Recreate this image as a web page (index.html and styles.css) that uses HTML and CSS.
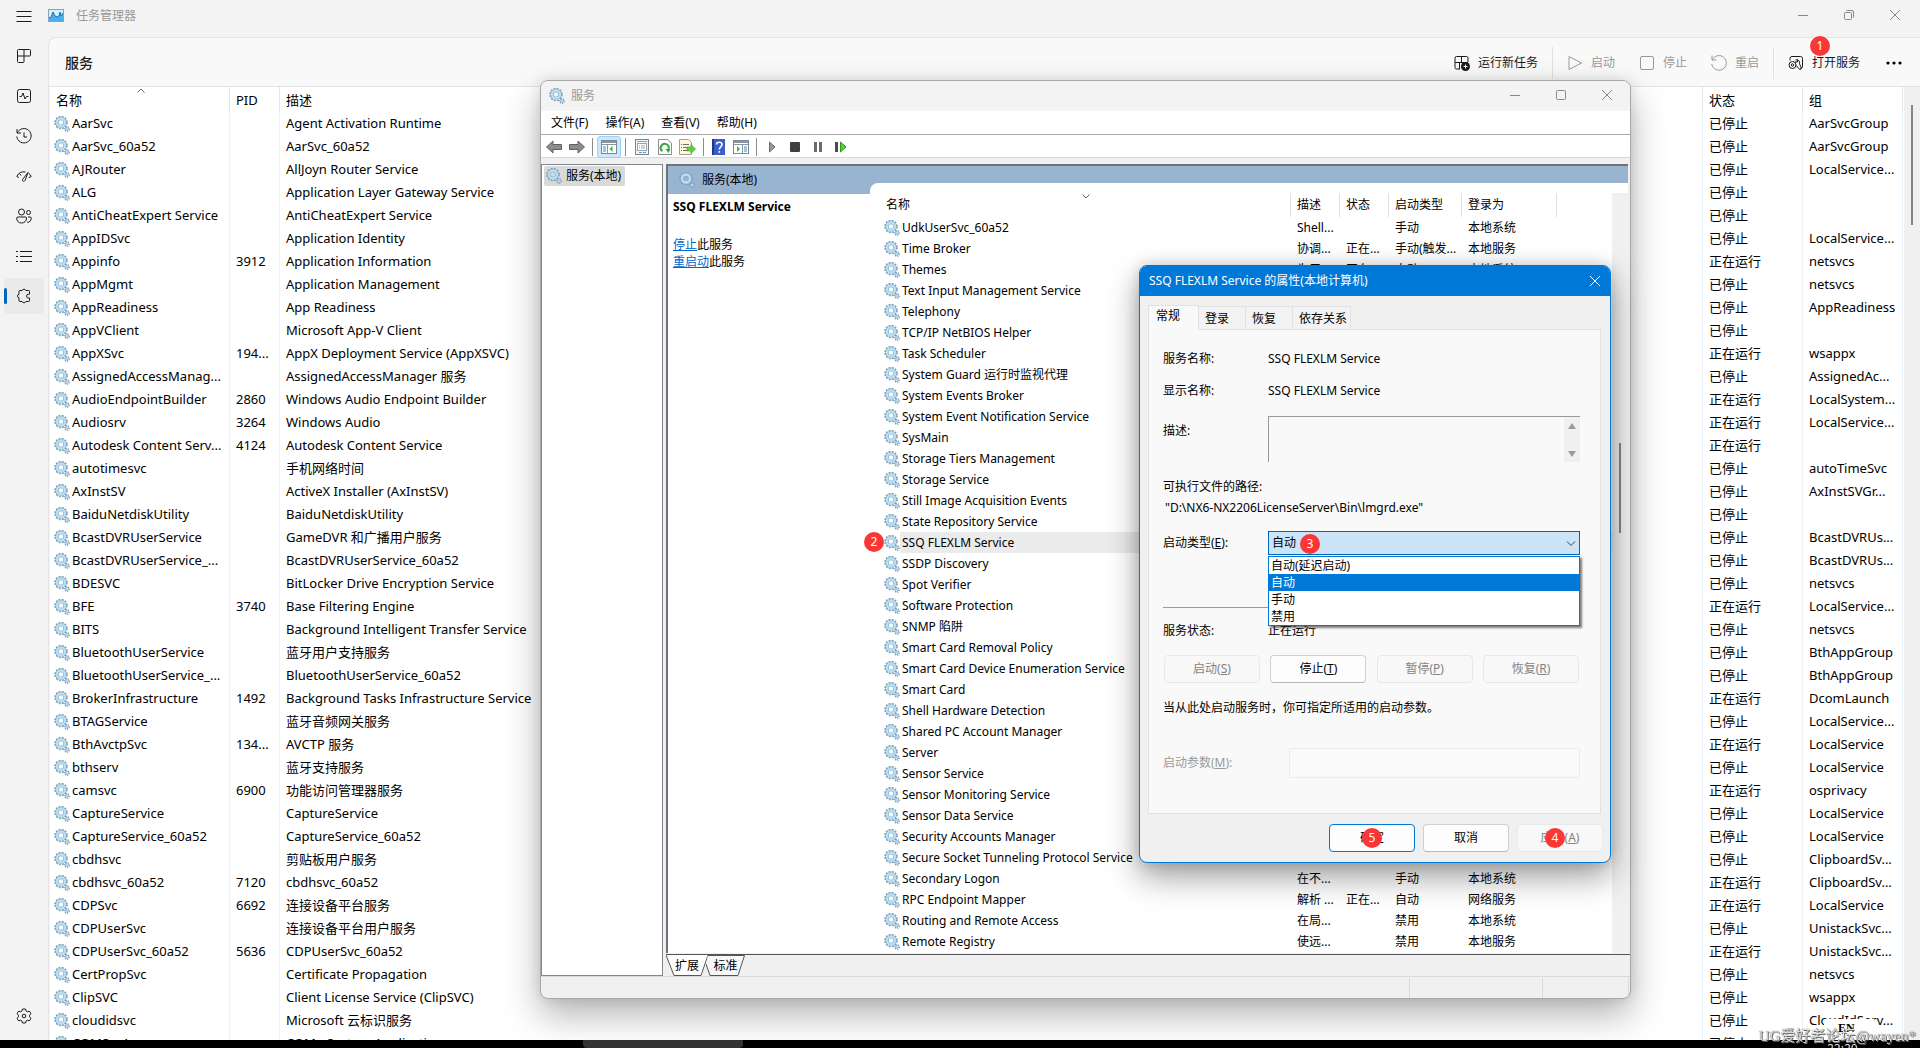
FILE: index.html
```html
<!DOCTYPE html>
<html lang="zh-CN">
<head>
<meta charset="utf-8">
<title>任务管理器</title>
<link rel="stylesheet" href="styles.css">
</head>
<body>
<svg class="defs" aria-hidden="true">
  <defs>
    <symbol id="gear" viewBox="0 0 16 16">
      <circle cx="7" cy="6.500" r="5.900" fill="none" stroke="#7d9db8" stroke-width="1.800" stroke-dasharray="1.800 1.300"/>
      <circle cx="7" cy="6.500" r="4" fill="none" stroke="#86a9c4" stroke-width="3.400"/>
      <circle cx="7" cy="6.500" r="4" fill="none" stroke="#b9dff2" stroke-width="2.400"/>
      <circle cx="13" cy="13" r="2.200" fill="none" stroke="#7d9db8" stroke-width="1.400" stroke-dasharray="1.100 .9"/>
      <circle cx="13" cy="13" r="1.300" fill="#fff" stroke="#8fb7d3" stroke-width="1.100"/>
    </symbol>
    <symbol id="close" viewBox="0 0 10 10"><path d="M0 0L10 10M10 0L0 10" fill="none" stroke="currentColor"/></symbol>
    <symbol id="min" viewBox="0 0 10 10"><path d="M0 5.500H10" fill="none" stroke="currentColor"/></symbol>
    <symbol id="max" viewBox="0 0 10 10"><rect x=".5" y=".5" width="9" height="9" rx="1" fill="none" stroke="currentColor"/></symbol>
  </defs>
</svg>

<div class="taskmgr">
  <header class="tm-title">
    <button class="icon-btn nav-toggle" aria-label="导航"><svg width="16" height="12" viewBox="0 0 16 12"><path d="M.5 1.500h15M.5 6.500h15M.5 11.500h15" stroke="#1b1b1b" fill="none"/></svg></button>
    <svg class="tm-logo" width="16" height="13" viewBox="0 0 16 13"><rect x=".5" y=".5" width="15" height="12" fill="#d9f0fc" stroke="#8aa2b4"/><path d="M1 9l2-1 2-5 2 4 2 1 2-1 1-4 1 4 2-3v8H1z" fill="#4aaeea"/><path d="M1 9l2-1 2-5 2 4 2 1 2-1 1-4 1 4 2-3" fill="none" stroke="#1673b8"/></svg>
    <span class="tm-name">任务管理器</span>
    <div class="tm-controls">
      <button class="icon-btn" aria-label="最小化"><svg width="10" height="10"><use href="#min"/></svg></button>
      <button class="icon-btn" aria-label="还原"><svg width="10" height="10" viewBox="0 0 10 10" fill="none" stroke="currentColor"><rect x=".5" y="2.500" width="7" height="7" rx="1"/><path d="M2.500 .5H8a1.500 1.500 0 0 1 1.500 1.500V7.500"/></svg></button>
      <button class="icon-btn" aria-label="关闭"><svg width="10" height="10"><use href="#close"/></svg></button>
    </div>
  </header>
  <div class="tm-body">
    <nav class="tm-nav">
      <button aria-label="进程"><svg width="16" height="16" viewBox="0 0 16 16"><path d="M3 1.500h10.500a1 1 0 0 1 1 1V7a1 1 0 0 1-1 1H8v5.500a1 1 0 0 1-1 1H2.500a1 1 0 0 1-1-1V2.500a1 1 0 0 1 1-1zM8 1.500V8M1.500 8H8"/></svg></button>
      <button aria-label="性能"><svg width="16" height="16" viewBox="0 0 16 16"><rect x="1.500" y="1.500" width="13" height="13" rx="2"/><path d="M3.500 8.500h2l1.500-3.500 2 6 1.500-2.500h2"/></svg></button>
      <button aria-label="应用历史记录"><svg width="16" height="16" viewBox="0 0 16 16"><path d="M1 1v4h4M1.300 5A7.200 7.200 0 1 1 .8 8.500M8 4.500V9h3"/></svg></button>
      <button aria-label="启动应用"><svg width="16" height="16" viewBox="0 0 16 16"><path d="M.8 8.500A8 8 0 0 1 9.500 4M12.500 5a8 8 0 0 1 2.700 3.500M.8 8.500l2 1M15.200 8.500l-2.500 1.200M12 4.500L9 12.500a1.300 1.300 0 0 1-2.500-1zM3.500 5.500l1.500 2"/></svg></button>
      <button aria-label="用户"><svg width="16" height="16" viewBox="0 0 16 16"><circle cx="5.500" cy="4" r="3"/><circle cx="12.500" cy="4.500" r="2"/><path d="M2 9h7.500a1 1 0 0 1 1 1c0 3-2 5-5 5s-4.800-2-4.800-5A1.200 1.200 0 0 1 2 9zM12 9h2.200a1 1 0 0 1 1 1c0 3-1.500 4.300-4 4.300"/></svg></button>
      <button aria-label="详细信息"><svg width="16" height="16" viewBox="0 0 16 16"><path d="M4 3.500h12M4 8.500h12M4 13.500h12"/><path d="M0 3.500h2M0 8.500h2M0 13.500h2"/></svg></button>
      <button class="current" aria-label="服务"><svg width="16" height="16" viewBox="0 0 16 16"><path d="M4 2.500h2.200a1.900 1.900 0 0 1 3.600 0H12.500a1 1 0 0 1 1 1V6.200h-1a1.900 1.900 0 0 0 0 3.800h1v2.500a1 1 0 0 1-1 1H9.800a1.900 1.900 0 0 1-3.600 0H4a1 1 0 0 1-1-1V9.900a1.900 1.900 0 0 1 0-3.700V3.500a1 1 0 0 1 1-1z"/></svg></button>
      <button class="settings" aria-label="设置"><svg width="16" height="16" viewBox="0 0 16 16"><path d="M6.500 1h3l.5 2 1.500.8 2-.6L15 5.800l-1.500 1.400v1.600L15 10.200l-1.500 2.600-2-.6-1.500.8-.5 2h-3L6 13l-1.500-.8-2 .6L1 10.200l1.500-1.400V7.200L1 5.800l1.500-2.600 2 .6L6 3z"/><circle cx="8" cy="8" r="1.800"/></svg></button>
    </nav>
    <main class="tm-main">
      <div class="tm-head">
        <h1>服务</h1>
        <div class="tm-actions">
          <button><svg width="16" height="16" viewBox="0 0 16 16"><path d="M14 7V3a1.500 1.500 0 0 0-1.500-1.500h-10A1.500 1.500 0 0 0 1 3v9.500A1.500 1.500 0 0 0 2.500 14H6M7.500 1.500v6M1 7.500h13M5.500 7.500V14" fill="none" stroke="#1b1b1b"/><circle cx="11.500" cy="11.500" r="4.500" fill="#1b1b1b"/><path d="M9.500 11.500h4M11.500 9.500v4" stroke="#fff"/></svg>运行新任务</button>
          <i></i>
          <button disabled><svg width="16" height="16" viewBox="0 0 16 16"><path d="M2 1.500L14.500 8 2 14.500z" fill="none" stroke="currentColor"/></svg>启动</button>
          <button disabled><svg width="16" height="16" viewBox="0 0 16 16"><rect x="1.500" y="1.500" width="13" height="13" rx="1.500" fill="none" stroke="currentColor"/></svg>停止</button>
          <button disabled><svg width="16" height="16" viewBox="0 0 16 16"><path d="M1 .5V5h4.500M1.300 5A7.300 7.300 0 1 1 .8 9" fill="none" stroke="currentColor"/></svg>重启</button>
          <i></i>
          <button class="open"><svg width="16" height="16" viewBox="0 0 16 16" fill="none" stroke="#1b1b1b"><path d="M2 5.500V3.500a2 2 0 0 1 2-2h8.500a2 2 0 0 1 2 2v8a2 2 0 0 1-2 2h-.5"/><circle cx="4.500" cy="10" r="3.500"/><circle cx="4.500" cy="10" r="1.200"/><path d="M7.500 5a3 3 0 0 1 4 3.800l2 4.500-1.500 1.500-4-4.500M9.500 4.500V7H7"/></svg>打开服务<b class="badge badge-1">1</b></button>
          <button class="more" aria-label="更多"><svg width="16" height="4" viewBox="0 0 16 4"><circle cx="2" cy="2" r="1.600"/><circle cx="8" cy="2" r="1.600"/><circle cx="14" cy="2" r="1.600"/></svg></button>
        </div>
      </div>
      <div class="tm-list">
        <table class="tm-table">
          <colgroup><col class="w-name"><col class="w-pid"><col><col class="w-state"><col class="w-group"></colgroup>
          <thead><tr><th>名称<svg class="sort" width="8" height="5" viewBox="0 0 8 5"><path d="M.5 4.500L4 1l3.500 3.500" fill="none" stroke="#666"/></svg></th><th>PID</th><th>描述</th><th>状态</th><th>组</th></tr></thead>
          <tbody id="tmRows"></tbody>
        </table>
        <div class="tm-scroll"><span></span></div>
      </div>
    </main>
  </div>
</div>
<footer class="taskbar"><span class="task-item"></span><time>22:20</time></footer>

<section class="svc-window" aria-label="服务">
  <header class="svc-title">
    <svg width="16" height="16"><use href="#gear"/></svg><span>服务</span>
    <div class="svc-controls">
      <button class="icon-btn" aria-label="最小化"><svg width="10" height="10"><use href="#min"/></svg></button>
      <button class="icon-btn" aria-label="最大化"><svg width="10" height="10"><use href="#max"/></svg></button>
      <button class="icon-btn" aria-label="关闭"><svg width="10" height="10"><use href="#close"/></svg></button>
    </div>
  </header>
  <div class="svc-menu"><button>文件(F)</button><button>操作(A)</button><button>查看(V)</button><button>帮助(H)</button></div>
  <div class="svc-tools">
    <button aria-label="后退"><svg width="16" height="16" viewBox="0 0 16 16"><path d="M.5 8L7 2v3.500h8.500v5H7V14z" fill="#8c8c8c" stroke="#5f5f5f"/></svg></button>
    <button class="fwd" aria-label="前进"><svg width="16" height="16" viewBox="0 0 16 16"><path d="M15.500 8L9 2v3.500H.5v5H9V14z" fill="#8c8c8c" stroke="#5f5f5f"/></svg></button>
    <i></i>
    <button class="pressed" aria-label="控制台树"><svg width="16" height="14" viewBox="0 0 16 14"><rect x=".5" y=".5" width="15" height="13" fill="#fff" stroke="#7d8894"/><path d="M1 2h14" stroke="#8b96a3" stroke-width="2"/><path d="M1 4.500h14M6.500 5v8" stroke="#8b96a3"/><path d="M2 7h3M2 9h3M2 11h3" stroke="#4a86c5"/><path d="M11.500 6v6L8.500 9z" fill="#3fb53f"/></svg></button>
    <i></i>
    <button class="wide" aria-label="属性"><svg width="16" height="16" viewBox="0 0 16 16"><rect x="1.500" y=".5" width="13" height="15" fill="#f3f6f9" stroke="#7c8288"/><rect x="3.500" y="4.500" width="9" height="7" fill="#fff" stroke="#9aa4ae"/><path d="M3 2.500h10M5 7h1M7 7h4M5 9h1M7 9h4" stroke="#9aa4ae"/><path d="M5 13.500h3M9 13.500h3" stroke="#4aa3df"/></svg></button>
    <button aria-label="刷新"><svg width="14" height="16" viewBox="0 0 14 16"><path d="M.5.5h9l4 3.500v11.500H.5z" fill="#fff" stroke="#8d8d8d"/><path d="M4.500 12.200A4 4 0 1 1 10.500 10" fill="none" stroke="#32a83a" stroke-width="2"/><path d="M7.500 10h5l-2 4z" fill="#32a83a"/></svg></button>
    <button aria-label="导出列表"><svg width="17" height="16" viewBox="0 0 17 16"><path d="M.5.5h9l3 3v12H.5z" fill="#fdf8d9" stroke="#a3a08c"/><path d="M2 5.500h1M4 5.500h6M2 8.500h1M4 8.500h5M2 11.500h1M4 11.500h5" stroke="#6f6f6f"/><path d="M8 8h4V5.500l4.500 4.500-4.500 4.500V12H8z" fill="#5fce3f" stroke="#3b9a2a" stroke-width=".6"/></svg></button>
    <i></i>
    <button class="wide" aria-label="帮助"><svg width="13" height="16" viewBox="0 0 13 16"><rect width="13" height="16" fill="#3a5fc8"/><path d="M1 0v16" stroke="#22398a" stroke-width="2"/><path d="M4.500 5.500C4.500 2.500 10 2.500 10 5.500 10 7.500 7.300 8 7.300 10.500M7.300 12v1.800" fill="none" stroke="#fff" stroke-width="1.600"/></svg></button>
    <button aria-label="操作窗格"><svg width="16" height="14" viewBox="0 0 16 14"><rect x=".5" y=".5" width="15" height="13" fill="#fff" stroke="#7d8894"/><path d="M1 2h14" stroke="#8b96a3" stroke-width="2"/><path d="M1 4.500h14M9.500 5v8" stroke="#8b96a3"/><path d="M11 7h3M11 9h3M11 11h3" stroke="#4a86c5"/><path d="M4 6v6l3-3z" fill="#3fb53f"/></svg></button>
    <i></i>
    <button class="run" aria-label="启动服务"><svg width="16" height="12" viewBox="0 0 16 12"><path d="M5.500 1v10L11 6z" fill="#9a9a9a" stroke="#6b6b6b"/></svg></button>
    <button class="run" aria-label="停止服务"><svg width="16" height="12" viewBox="0 0 16 12"><rect x="3" y="1" width="10" height="10" rx="1" fill="#3f3f3f"/></svg></button>
    <button class="run" aria-label="暂停服务"><svg width="16" height="12" viewBox="0 0 16 12"><path d="M5.500 1v10M10.500 1v10" stroke="#6b6b6b" stroke-width="3"/></svg></button>
    <button class="run" aria-label="重新启动服务"><svg width="16" height="12" viewBox="0 0 16 12"><path d="M3.500 1v10" stroke="#4b4b4b" stroke-width="3"/><path d="M7.500 1v10L13 6z" fill="#4fd32f" stroke="#2f9a1c"/></svg></button>
  </div>
  <div class="svc-body">
    <div class="svc-tree"><span><svg width="16" height="16"><use href="#gear"/></svg>服务(本地)</span></div>
    <div class="svc-right">
      <div class="svc-pane">
        <div class="svc-info">
          <div class="svc-band"><svg width="16" height="16"><use href="#gear"/></svg>服务(本地)</div>
          <div class="svc-detail">
            <h2>SSQ FLEXLM Service</h2>
            <p><a href="#stop">停止</a>此服务</p>
            <p><a href="#restart">重启动</a>此服务</p>
          </div>
        </div>
        <div class="svc-list">
          <table class="svc-table">
            <colgroup><col class="c-name"><col class="c-desc"><col class="c-desc"><col class="c-start"><col class="c-logon"><col></colgroup>
            <thead><tr><th>名称<svg class="sort" width="8" height="5" viewBox="0 0 8 5"><path d="M.5.5L4 4 7.500.5" fill="none" stroke="#666"/></svg></th><th>描述</th><th>状态</th><th>启动类型</th><th>登录为</th><th></th></tr></thead>
            <tbody id="svcRows"></tbody>
          </table>
          <div class="svc-scroll"><span></span></div>
        </div>
      </div>
      <div class="svc-tabs">
        <button class="active"><svg width="42" height="21" viewBox="0 0 42 21"><path d="M0 0L8 20.500H35L42 0z" fill="#fff"/><path d="M0 0L8 20.500H35L42 0" fill="none" stroke="#555"/></svg><span>扩展</span></button>
        <button><svg width="39" height="21" viewBox="0 0 39 21"><path d="M2 0H39L32 20.500H4L0 9z" fill="#f7f7f7"/><path d="M2 .5H38.500L32 20.500H4L0 9" fill="none" stroke="#555"/></svg><span>标准</span></button>
      </div>
    </div>
  </div>
  <div class="svc-status"><span></span><span></span><span></span></div>
</section>

<section class="dialog" role="dialog" aria-label="SSQ FLEXLM Service 的属性">
  <header class="dlg-title"><span>SSQ FLEXLM Service 的属性(本地计算机)</span><button class="icon-btn" aria-label="关闭"><svg width="10" height="10"><use href="#close"/></svg></button></header>
  <div class="dlg-tabs" role="tablist"><button class="active" role="tab">常规</button><button role="tab">登录</button><button role="tab">恢复</button><button class="wide" role="tab">依存关系</button></div>
  <form class="dlg-panel">
    <div class="row first"><span>服务名称:</span><span>SSQ FLEXLM Service</span></div>
    <div class="row second"><span>显示名称:</span><span>SSQ FLEXLM Service</span></div>
    <div class="row desc"><label for="desc">描述:</label><div class="desc-box"><textarea id="desc" readonly></textarea><div class="arrows"><svg width="8" height="6" viewBox="0 0 8 6"><path d="M4 0L8 6H0z"/></svg><svg width="8" height="6" viewBox="0 0 8 6"><path d="M0 0h8L4 6z"/></svg></div></div></div>
    <p class="path-label">可执行文件的路径:</p>
    <p class="path">"D:\NX6-NX2206LicenseServer\Bin\lmgrd.exe"</p>
    <div class="row start"><label for="startType">启动类型(<u>E</u>):</label>
      <div class="combo">
        <select id="startType"><option>自动(延迟启动)</option><option selected>自动</option><option>手动</option><option>禁用</option></select>
        <svg class="chev" width="10" height="6" viewBox="0 0 10 6"><path d="M1 .5l4 4 4-4" fill="none" stroke="#444"/></svg>
        <b class="badge badge-3">3</b>
        <ul class="options" role="listbox"><li role="option">自动(延迟启动)</li><li role="option" class="on">自动</li><li role="option">手动</li><li role="option">禁用</li></ul>
      </div>
    </div>
    <hr>
    <div class="row state"><span>服务状态:</span><span>正在运行</span></div>
    <div class="svc-buttons"><button type="button" disabled>启动(<u>S</u>)</button><button type="button">停止(<u>T</u>)</button><button type="button" disabled>暂停(<u>P</u>)</button><button type="button" disabled>恢复(<u>R</u>)</button></div>
    <p class="hint">当从此处启动服务时，你可指定所适用的启动参数。</p>
    <div class="row params"><label for="params">启动参数(<u>M</u>):</label><input id="params" type="text" disabled></div>
  </form>
  <footer class="dlg-foot"><button class="primary">确定<b class="badge badge-mid">5</b></button><button>取消</button><button disabled>应用(<u>A</u>)<b class="badge badge-left">4</b></button></footer>
</section>

<div class="ime">EN</div>
<div class="watermark">UG爱好者论坛@wayen*</div>
<script src="app.js"></script>
</body>
</html>
```
FILE: styles.css
```css
* { box-sizing: border-box; }
html, body { height: 100%; }
body {
  margin: 0; overflow: hidden; display: flex; flex-direction: column; position: relative;
  font-family: "Noto Sans", "Noto Sans CJK SC", sans-serif; font-size: 12px; line-height: 18px; color: #000; background: #f3f3f3;
}
h1, h2, p, ul { margin: 0; padding: 0; }
button { font: inherit; color: inherit; background: none; border: 0; padding: 0; }
svg { display: block; flex: none; }
.defs { position: absolute; width: 0; height: 0; }
.icon-btn { display: flex; align-items: center; justify-content: center; color: #888; }

/* task manager */
.taskmgr { flex: 1; min-height: 0; display: flex; flex-direction: column; }
.tm-title { height: 37px; flex: none; display: flex; align-items: center; padding: 0 2px 6px 16px; }
.tm-logo { margin-left: 16px; }
.tm-name { margin-left: 12px; color: #999; }
.tm-controls { margin-left: auto; display: flex; }
.tm-controls .icon-btn { width: 46px; height: 28px; padding-bottom: 2px; }
.tm-body { flex: 1; min-height: 0; display: flex; }
.tm-nav { width: 48px; flex: none; display: flex; flex-direction: column; align-items: center; gap: 4px; padding: 1px 0 6px; }
.tm-nav button { position: relative; width: 40px; height: 36px; display: flex; align-items: center; justify-content: center; border-radius: 5px; }
.tm-nav svg { fill: none; stroke: #1b1b1b; }
.tm-nav .current { background: #eaeaea; }
.tm-nav .current::before { content: ""; position: absolute; left: 0; top: 10px; width: 3px; height: 16px; border-radius: 2px; background: #0067c0; }
.tm-nav .settings { margin-top: auto; }
.tm-main { flex: 1; min-width: 0; display: flex; flex-direction: column; border: 1px solid #e5e5e5; border-width: 1px 0 0 1px; border-radius: 8px 0 0 0; background: #f9f9f9; }
.tm-head { height: 49px; flex: none; display: flex; align-items: center; padding: 2px 16px 0; border-bottom: 1px solid #e5e5e5; }
.tm-head h1 { font-size: 14px; font-weight: 500; color: #1b1b1b; }
.tm-actions { margin-left: auto; display: flex; align-items: center; color: #1b1b1b; }
.tm-actions button { position: relative; display: flex; align-items: center; gap: 8px; margin-right: 24px; }
.tm-actions button:has(+ i) { margin-right: 14px; }
.tm-actions button:disabled { color: #999; }
.tm-actions i { width: 1px; height: 32px; background: #e0e0e0; margin-right: 14px; }
.tm-actions .open { margin-right: 26px; }
.tm-actions .more { margin-right: 2px; }
.tm-list { flex: 1; min-height: 0; overflow: hidden; display: flex; background: #fff; border-left: 1px solid #f3f3f3; }
.tm-table { flex: 1; min-width: 0; table-layout: fixed; border-collapse: separate; border-spacing: 0; font-size: 13px; height: max-content; }
.w-name { width: 180px; }
.w-pid { width: 50px; }
.w-state, .w-group { width: 100px; }
.tm-table th { position: relative; height: 25px; padding: 0 0 0 6px; font-weight: 400; text-align: left; border-right: 1px solid #e5e5e5; }
.tm-table .sort { position: absolute; left: 87px; top: 1px; }
.tm-table td { height: 23px; padding: 0 0 0 6px; line-height: 23px; white-space: nowrap; overflow: hidden; border-right: 1px solid #e9f1fb; }
.tm-table td:first-child { padding-left: 4px; }
.cell { display: flex; align-items: center; gap: 2px; }
.tm-scroll { width: 17px; flex: none; border-left: 1px solid #fff; background: #f0f0f0; display: flex; justify-content: center; padding-top: 18px; }
.tm-scroll span { width: 2px; height: 120px; background: #858585; }
.taskbar { height: 8px; flex: none; overflow: hidden; background: #000; display: flex; padding-left: 583px; }
.task-item { width: 160px; background: #333; border-radius: 0 0 4px 4px; }
.taskbar time { margin-left: 1084px; color: #ddd; font-size: 12px; }

/* services console */
.svc-window { position: absolute; left: 540px; top: 80px; width: 1091px; height: 919px; display: flex; flex-direction: column; border: 1px solid #a8a8a8; border-radius: 8px; overflow: hidden; background: #f0f0f0; box-shadow: 0 16px 36px rgba(0,0,0,.3), 0 0 12px rgba(0,0,0,.1); }
.svc-title { height: 30px; flex: none; display: flex; align-items: center; gap: 6px; padding-left: 8px; color: #999; background: #f3f3f3; }
.svc-controls { margin-left: auto; display: flex; }
.svc-controls .icon-btn { width: 46px; height: 28px; padding-bottom: 2px; }
.svc-menu { height: 24px; flex: none; display: flex; align-items: center; gap: 17px; padding-left: 10px; background: #fff; border-bottom: 1px solid #a8a8a8; }
.svc-tools { height: 23px; flex: none; display: flex; align-items: center; gap: 7px; padding: 1px 0 0 5px; background: #fff; border-bottom: 1px solid #d9d9d9; }
.svc-tools i { width: 1px; height: 18px; background: #8c8c8c; }
.svc-tools .wide { padding: 0 1px; }
.svc-tools .pressed { width: 24px; height: 22px; margin: 0 -3px; display: flex; align-items: center; justify-content: center; border: 1px solid #99d1ff; border-radius: 3px; background: #cce8ff; }
.svc-body { flex: 1; min-height: 0; display: flex; gap: 3px; padding-top: 6px; }
.svc-tree { width: 122px; flex: none; background: #fff; border: 1px solid #828790; padding: 1px 0 0 2px; }
.svc-tree span { display: inline-flex; align-items: center; gap: 4px; height: 20px; padding: 0 4px 0 2px; background: #d9d9d9; border-radius: 2px; }
.svc-right { flex: 1; min-width: 0; display: flex; flex-direction: column; }
.svc-pane { flex: 1; min-height: 0; display: flex; background: #99b4d1; border: 2px solid #6e7378; border-width: 2px 0 0 2px; margin-right: 2px; }
.svc-info { width: 202px; flex: none; display: flex; flex-direction: column; }
.svc-band { height: 28px; display: flex; align-items: center; gap: 7px; padding-left: 11px; }
.svc-detail { flex: 1; background: #fff; padding: 4px 0 0 5px; line-height: 17px; }
.svc-detail h2 { font-size: 12px; line-height: 18px; margin-bottom: 20px; }
.svc-detail a { color: #0066cc; }
.svc-list { flex: 1; min-width: 0; margin-top: 17px; padding-top: 10px; display: flex; background: #fff; border-radius: 8px 0 0 0; }
.svc-table { flex: 1; min-width: 0; height: max-content; table-layout: fixed; border-collapse: separate; border-spacing: 0; }
.c-name { width: 421px; }
.c-desc { width: 49px; }
.c-start { width: 73px; }
.c-logon { width: 95px; }
.svc-table th { position: relative; height: 24px; padding: 0 0 0 6px; font-weight: 400; text-align: left; white-space: nowrap; border-right: 1px solid #e0e0e0; }
.svc-table th:last-child { border: 0; }
.svc-table th:first-child { padding-left: 16px; }
.svc-table .sort { position: absolute; left: 212px; top: 1px; }
.svc-table td { height: 21px; line-height: 21px; padding: 0 0 0 6px; white-space: nowrap; overflow: hidden; }
.svc-table td:first-child { padding-left: 14px; }
.svc-table td:first-child .badge { left: -6px; top: 0; }
.svc-table .selected td { background: #ebebeb; }
.svc-table .selected td:first-child { background: linear-gradient(#ebebeb, #ebebeb) 30px 0 no-repeat; }
.svc-table td.step-cell { position: relative; overflow: visible; }
.svc-scroll { width: 16px; flex: none; background: #f0f0f0; display: flex; justify-content: center; padding-top: 250px; }
.svc-scroll span { width: 2px; height: 90px; background: #858585; }
.svc-tabs { height: 22px; flex: none; display: flex; border-top: 1px solid #555; margin-top: 1px; }
.svc-tabs button { position: relative; height: 21px; }
.svc-tabs button + button { margin-left: -2px; }
.svc-tabs span { position: absolute; inset: 0; line-height: 21px; text-align: center; }
.svc-status { height: 22px; flex: none; display: flex; justify-content: flex-end; padding: 1px 1px 0 0; border-top: 1px solid #d9d9d9; }
.svc-status span { width: 133px; border-right: 1px solid #d9d9d9; }
.svc-status span:last-child { width: 86px; }

/* properties dialog */
.dialog { position: absolute; left: 1139px; top: 265px; width: 472px; height: 598px; display: flex; flex-direction: column; border: 1px solid #0078d7; border-radius: 8px; overflow: hidden; background: #f0f0f0; box-shadow: 0 14px 32px rgba(0,0,0,.38), 0 0 14px rgba(0,0,0,.16); }
.dlg-title { height: 30px; flex: none; display: flex; align-items: center; justify-content: space-between; padding: 0 10px 0 9px; color: #fff; background: #0078d7; }
.dlg-title .icon-btn { color: #fff; }
.dlg-tabs { height: 33px; flex: none; display: flex; align-items: flex-end; padding-left: 8px; }
.dlg-tabs button { height: 23px; width: 47px; padding: 1px 0 0 6px; text-align: left; border: 1px solid #e2e2e2; border-width: 1px 1px 0 0; background: #f3f3f3; }
.dlg-tabs .active { position: relative; width: 51px; height: 25px; padding: 0 0 4px 7px; margin-bottom: -1px; border-left-width: 1px; background: #f9f9f9; }
.dlg-tabs .wide { width: 58px; }
.dlg-panel { flex: none; height: 485px; margin: 0 9px 0 8px; padding: 20px 20px 0 14px; border: 1px solid #e2e2e2; background: #f9f9f9; }
.row { display: grid; grid-template-columns: 105px 1fr; align-items: center; }
.second { margin-top: 14px; }
.desc { margin-top: 16px; align-items: start; }
.desc label { padding-top: 6px; }
.desc-box { height: 46px; display: flex; border: 1px solid #999; border-width: 1px 0 0 1px; }
.desc-box textarea { flex: 1; min-width: 0; resize: none; border: 0; background: none; }
.arrows { width: 16px; background: #f0f0f0; display: flex; flex-direction: column; align-items: center; justify-content: space-between; padding: 6px 0 5px; fill: #9a9a9a; }
.path-label { margin-top: 16px; }
.path { margin-top: 3px; padding-left: 2px; }
.start { margin-top: 14px; }
.combo { position: relative; height: 24px; display: flex; }
.combo select { flex: 1; appearance: none; font: inherit; color: #000; padding: 0 3px; border: 1px solid #0067b8; border-radius: 0; background: #cce4f7; }
.chev { position: absolute; right: 4px; top: 10px; }
.options { position: absolute; z-index: 2; left: 0; right: 0; top: 25px; list-style: none; border: 1px solid #0078d7; background: #fff; line-height: 17px; box-shadow: 2px 2px 2px rgba(0,0,0,.5); }
.options li { padding-left: 2px; }
.options .on { color: #fff; background: #0078d7; }
hr { margin: 52px 0 0; border: 0; border-top: 1px solid #999; }
.state { margin-top: 14px; }
.svc-buttons { margin-top: 15px; padding: 0 1px; display: flex; justify-content: space-between; }
.svc-buttons button, .dlg-foot button { position: relative; width: 96px; height: 28px; border: 1px solid #d0d0d0; border-bottom-color: #b8b8b8; border-radius: 4px; background: #fdfdfd; }
.dialog button:disabled { color: #838383; border-color: #e8e8e8; background: #f8f8f8; }
.hint { margin-top: 16px; }
.params { margin-top: 31px; grid-template-columns: 126px 1fr; }
.params label { color: #999; }
.params input { height: 30px; min-width: 0; border: 1px solid #ebebeb; border-radius: 2px; background: #fafafa; }
.dlg-foot { display: flex; justify-content: flex-end; gap: 8px; padding: 10px 7px 0 0; }
.dlg-foot button { width: 86px; }
.dlg-foot .primary { border-color: #0078d7; }

/* step markers */
.badge { position: absolute; width: 20px; height: 20px; border-radius: 50%; background: #fa3636; color: #fff; font-size: 12px; font-weight: 400; line-height: 20px; text-align: center; }
.badge-1 { left: 22px; top: -18px; z-index: 1; }
.badge-3 { left: 32px; top: 3px; }
.badge-mid { left: 32px; top: 3px; }
.badge-left { left: 27px; top: 3px; }

.ime { position: fixed; right: 46px; bottom: 9px; width: 50px; height: 20px; padding-left: 14px; background: #fff; font: 700 12px/18px "Liberation Serif", serif; }
.watermark { position: fixed; right: 4px; bottom: 2px; font: 15px/20px "Liberation Serif", "Noto Sans CJK SC", serif; color: #ddd; text-shadow: 0 0 1px #333, 1px 1px 0 #777; }
```
FILE: app.js
```js
const GEAR = '<svg width="16" height="16"><use href="#gear"/></svg>';
const ON = '正在运行';
const OFF = '已停止';

const processes = [
  ['AarSvc', '', 'Agent Activation Runtime', OFF, 'AarSvcGroup'],
  ['AarSvc_60a52', '', 'AarSvc_60a52', OFF, 'AarSvcGroup'],
  ['AJRouter', '', 'AllJoyn Router Service', OFF, 'LocalService...'],
  ['ALG', '', 'Application Layer Gateway Service', OFF, ''],
  ['AntiCheatExpert Service', '', 'AntiCheatExpert Service', OFF, ''],
  ['AppIDSvc', '', 'Application Identity', OFF, 'LocalService...'],
  ['Appinfo', '3912', 'Application Information', ON, 'netsvcs'],
  ['AppMgmt', '', 'Application Management', OFF, 'netsvcs'],
  ['AppReadiness', '', 'App Readiness', OFF, 'AppReadiness'],
  ['AppVClient', '', 'Microsoft App-V Client', OFF, ''],
  ['AppXSvc', '194...', 'AppX Deployment Service (AppXSVC)', ON, 'wsappx'],
  ['AssignedAccessManag...', '', 'AssignedAccessManager 服务', OFF, 'AssignedAc...'],
  ['AudioEndpointBuilder', '2860', 'Windows Audio Endpoint Builder', ON, 'LocalSystem...'],
  ['Audiosrv', '3264', 'Windows Audio', ON, 'LocalService...'],
  ['Autodesk Content Serv...', '4124', 'Autodesk Content Service', ON, ''],
  ['autotimesvc', '', '手机网络时间', OFF, 'autoTimeSvc'],
  ['AxInstSV', '', 'ActiveX Installer (AxInstSV)', OFF, 'AxInstSVGr...'],
  ['BaiduNetdiskUtility', '', 'BaiduNetdiskUtility', OFF, ''],
  ['BcastDVRUserService', '', 'GameDVR 和广播用户服务', OFF, 'BcastDVRUs...'],
  ['BcastDVRUserService_...', '', 'BcastDVRUserService_60a52', OFF, 'BcastDVRUs...'],
  ['BDESVC', '', 'BitLocker Drive Encryption Service', OFF, 'netsvcs'],
  ['BFE', '3740', 'Base Filtering Engine', ON, 'LocalService...'],
  ['BITS', '', 'Background Intelligent Transfer Service', OFF, 'netsvcs'],
  ['BluetoothUserService', '', '蓝牙用户支持服务', OFF, 'BthAppGroup'],
  ['BluetoothUserService_...', '', 'BluetoothUserService_60a52', OFF, 'BthAppGroup'],
  ['BrokerInfrastructure', '1492', 'Background Tasks Infrastructure Service', ON, 'DcomLaunch'],
  ['BTAGService', '', '蓝牙音频网关服务', OFF, 'LocalService...'],
  ['BthAvctpSvc', '134...', 'AVCTP 服务', ON, 'LocalService'],
  ['bthserv', '', '蓝牙支持服务', OFF, 'LocalService'],
  ['camsvc', '6900', '功能访问管理器服务', ON, 'osprivacy'],
  ['CaptureService', '', 'CaptureService', OFF, 'LocalService'],
  ['CaptureService_60a52', '', 'CaptureService_60a52', OFF, 'LocalService'],
  ['cbdhsvc', '', '剪贴板用户服务', OFF, 'ClipboardSv...'],
  ['cbdhsvc_60a52', '7120', 'cbdhsvc_60a52', ON, 'ClipboardSv...'],
  ['CDPSvc', '6692', '连接设备平台服务', ON, 'LocalService'],
  ['CDPUserSvc', '', '连接设备平台用户服务', OFF, 'UnistackSvc...'],
  ['CDPUserSvc_60a52', '5636', 'CDPUserSvc_60a52', ON, 'UnistackSvc...'],
  ['CertPropSvc', '', 'Certificate Propagation', OFF, 'netsvcs'],
  ['ClipSVC', '', 'Client License Service (ClipSVC)', OFF, 'wsappx'],
  ['cloudidsvc', '', 'Microsoft 云标识服务', OFF, 'CloudIdServ...'],
  ['COMSysApp', '', 'COM+ System Application', OFF, '']
];

const services = [
  ['UdkUserSvc_60a52', 'Shell...', '', '手动', '本地系统'],
  ['Time Broker', '协调...', '正在...', '手动(触发...', '本地服务'],
  ['Themes', '为用...', '正在...', '自动', '本地系统'],
  ['Text Input Management Service'], ['Telephony'], ['TCP/IP NetBIOS Helper'],
  ['Task Scheduler'], ['System Guard 运行时监视代理'], ['System Events Broker'],
  ['System Event Notification Service'], ['SysMain'], ['Storage Tiers Management'],
  ['Storage Service'], ['Still Image Acquisition Events'], ['State Repository Service'],
  ['SSQ FLEXLM Service'], ['SSDP Discovery'], ['Spot Verifier'], ['Software Protection'],
  ['SNMP 陷阱'], ['Smart Card Removal Policy'], ['Smart Card Device Enumeration Service'],
  ['Smart Card'], ['Shell Hardware Detection'], ['Shared PC Account Manager'], ['Server'],
  ['Sensor Service'], ['Sensor Monitoring Service'], ['Sensor Data Service'],
  ['Security Accounts Manager'], ['Secure Socket Tunneling Protocol Service'],
  ['Secondary Logon', '在不...', '', '手动', '本地系统'],
  ['RPC Endpoint Mapper', '解析 ...', '正在...', '自动', '网络服务'],
  ['Routing and Remote Access', '在局...', '', '禁用', '本地系统'],
  ['Remote Registry', '使远...', '', '禁用', '本地服务']
];

document.getElementById('tmRows').innerHTML = processes.map(([name, ...rest]) =>
  `<tr><td><div class="cell">${GEAR}${name}</div></td>${rest.map(v => `<td>${v}</td>`).join('')}</tr>`
).join('');

document.getElementById('svcRows').innerHTML = services.map(([name, ...rest]) => {
  const selected = name === 'SSQ FLEXLM Service';
  const badge = selected ? '<b class="badge">2</b>' : '';
  const cells = [0, 1, 2, 3].map(i => `<td>${rest[i] || ''}</td>`).join('') + '<td></td>';
  return `<tr class="${selected ? 'selected' : ''}"><td class="${selected ? 'step-cell' : ''}"><div class="cell">${badge}${GEAR}${name}</div></td>${cells}</tr>`;
}).join('');
```
